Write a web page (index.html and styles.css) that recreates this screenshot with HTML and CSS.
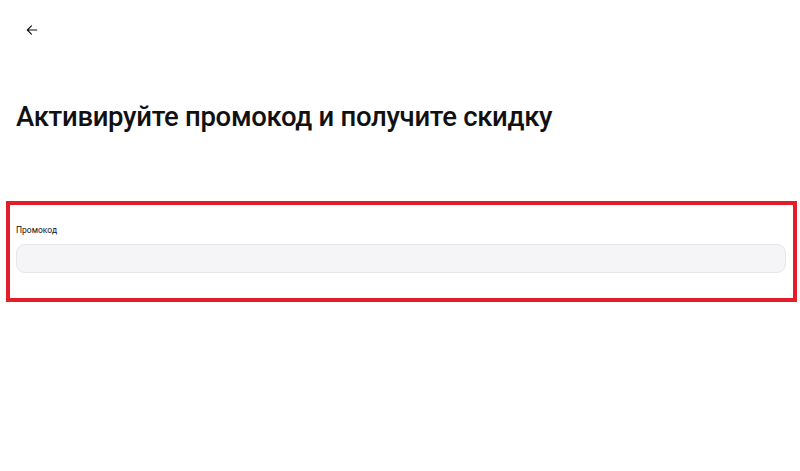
FILE: index.html
```html
<!DOCTYPE html>
<html lang="ru">
<head>
  <meta charset="UTF-8" />
  <meta name="viewport" content="width=device-width, initial-scale=1.0" />
  <title>Промокод</title>
  <link rel="stylesheet" href="styles.css">
</head>
<body>
  <header class="top-bar">
    <button class="back-button" aria-label="Назад">
      <svg viewBox="0 0 24 24" width="14" height="14">
        <path d="M20 12H5M11 5l-7 7 7 7" fill="none" stroke="#111" stroke-width="2" stroke-linecap="round" stroke-linejoin="round" />
      </svg>
    </button>
  </header>

  <main class="promo-page">
    <h1>Активируйте промокод и получите скидку</h1>

    <form class="promo-form">
      <label class="field-label" for="promo">Промокод</label>
      <input class="field-input" id="promo" type="text" />
    </form>
  </main>
</body>
</html>
```

FILE: styles.css
```css
body {
  margin: 0;
  font-family: Roboto, "Noto Sans", sans-serif;
  background: #ffffff;
  color: #111;
}

.top-bar {
  height: 60px;
  display: flex;
  align-items: center;
  padding-left: 22px;
}

.back-button {
  width: 20px;
  height: 20px;
  padding: 0;
  border: none;
  background: none;
  display: flex;
  align-items: center;
  justify-content: center;
  cursor: pointer;
}

.promo-page {
  padding: 0 0 0 6px;
}

.promo-page h1 {
  margin: 40px 0 0 10px;
  font-size: 27.5px;
  font-weight: 500;
  letter-spacing: -0.3px;
  line-height: 34px;
}

.promo-form {
  margin-top: 67px;
  width: 791px;
  height: 101px;
  box-sizing: border-box;
  border: 4px solid #e31e2b;
  padding: 19px 7px 0 6px;
  display: flex;
  flex-direction: column;
}

.field-label {
  font-size: 8.5px;
  line-height: 12px;
  color: #111;
}

.field-input {
  margin-top: 8px;
  height: 29px;
  box-sizing: border-box;
  border: 1px solid #e6e6ea;
  border-radius: 9px;
  background: #f5f5f7;
  outline: none;
}
```
